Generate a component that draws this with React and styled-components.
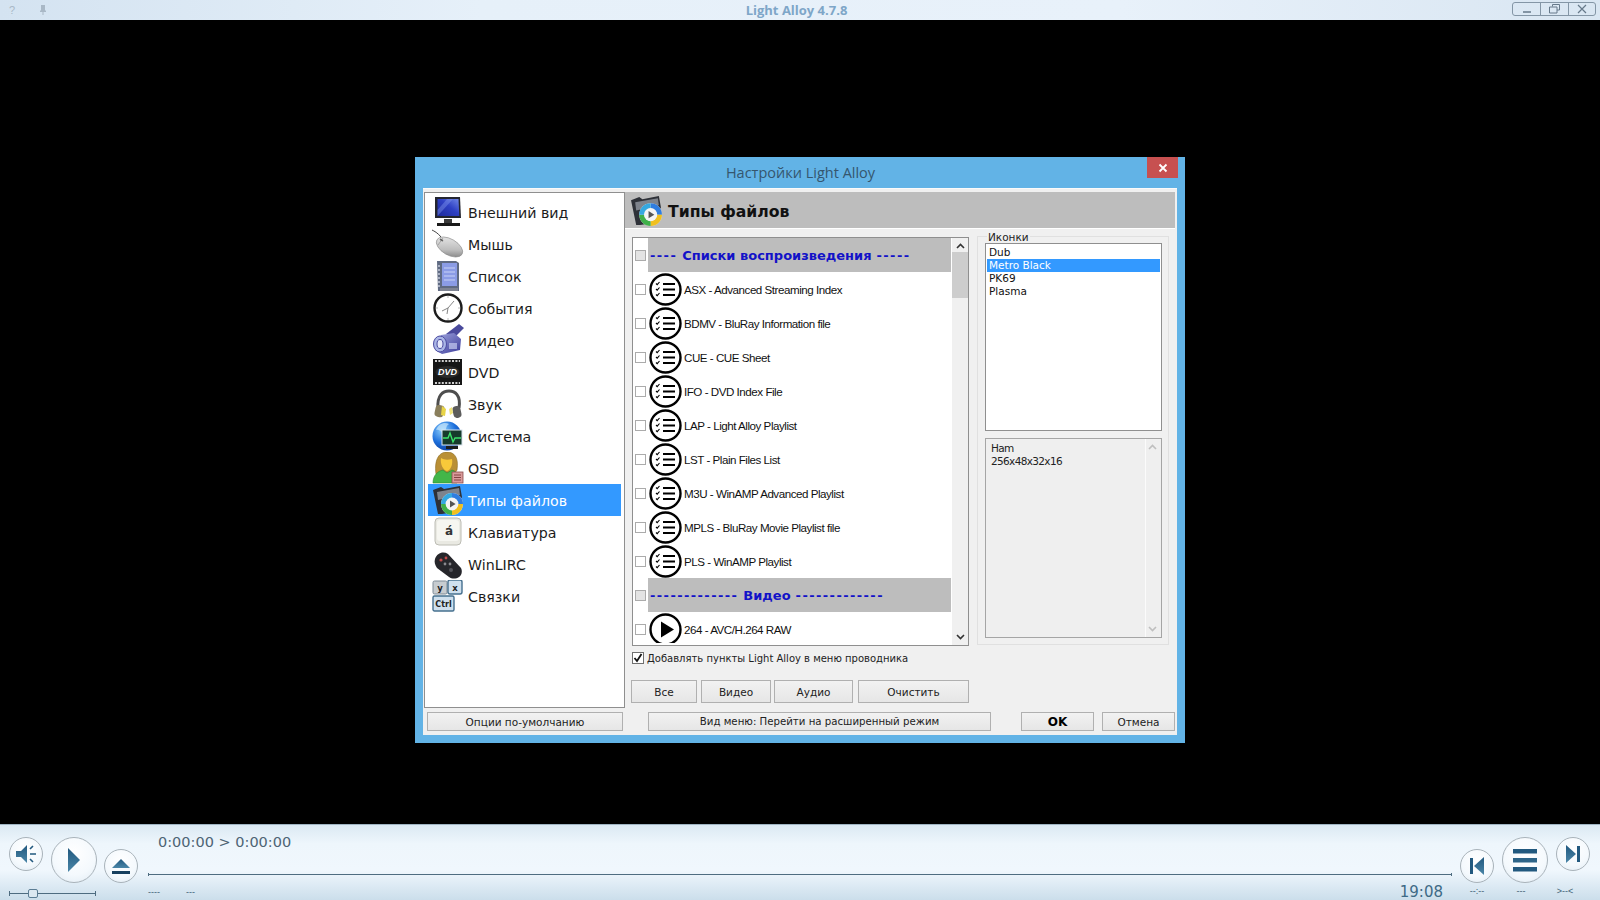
import React from "react";
import styled, { createGlobalStyle } from "styled-components";

const GlobalStyle = createGlobalStyle`
  html, body { margin: 0; padding: 0; background: #000; }
  body { font-family: "DejaVu Sans", sans-serif; overflow: hidden; }
  * { box-sizing: border-box; }
`;

const Page = styled.div`
  width: 1600px;
  height: 900px;
  display: grid;
  grid-template-rows: 20px 1fr 76px;
  background: #000;
`;

/* top title bar */
const TopBar = styled.div`
  display: grid;
  grid-template-columns: 1fr auto 1fr;
  align-items: center;
  padding: 0 4px 0 9px;
  background: linear-gradient(90deg, #d4e3f1 0%, #e6f0f9 30%, #e8f1fa 70%, #d9e6f2 100%);
`;
const TopLeft = styled.div`
  display: flex;
  align-items: center;
  gap: 24px;
  color: #a9b8c6;
  font: 11px "Liberation Sans", sans-serif;
`;
const TopTitle = styled.div`
  margin-right: 12px;
  color: #7ea6c8;
  font: bold 13px "Open Sans", sans-serif;
`;
const WindowButtons = styled.div`
  justify-self: end;
  display: flex;
  height: 14px;
  margin-top: -2px;
  border: 1px solid #8496a6;
  border-radius: 3px;
`;
const WindowButton = styled.div`
  width: 27.33px;
  display: flex;
  align-items: center;
  justify-content: center;
  & + & { border-left: 1px solid #8496a6; }
`;

/* video area with the settings window */
const Stage = styled.div`
  padding: 137px 0 0 415px;
  overflow: hidden;
`;
const Dialog = styled.div`
  width: 770px;
  height: 586px;
  display: flex;
  flex-direction: column;
  padding: 0 8px 8px;
  background: #62b3e6;
`;
const DialogHead = styled.div`
  height: 31px;
  flex: none;
  display: flex;
  align-items: flex-start;
  justify-content: space-between;
`;
const DialogTitle = styled.div`
  flex: 1;
  padding: 6px 0 0 31px;
  text-align: center;
  color: #35566e;
  font: 14.5px "Open Sans", sans-serif;
`;
const CloseButton = styled.div`
  width: 31px;
  height: 21px;
  margin-right: -1px;
  display: flex;
  align-items: center;
  justify-content: center;
  background: #c75050;
`;
const Client = styled.div`
  flex: 1;
  display: flex;
  flex-direction: column;
  padding: 4px 1px;
  background: #f0f0f0;
  border-top: 1px solid #fafafa;
`;
const Body = styled.div`
  display: flex;
  height: 516px;
  margin-top: -1px;
`;

const Sidebar = styled.div`
  width: 201px;
  flex: none;
  padding: 3px 3px 0 3px;
  background: #fff;
  border: 1px solid #8f8f8f;
`;
const SideRow = styled.div`
  height: 32px;
  display: flex;
  align-items: center;
  gap: 4px;
  padding-left: 4px;
  font-size: 14.2px;
  color: ${(p) => (p.$active ? "#fff" : "#1c1c1c")};
  background: ${(p) => (p.$active ? "#3399ff" : "transparent")};
`;
const SideLabel = styled.span`
  padding-top: 2px;
`;

const Main = styled.div`
  flex: 1;
  display: flex;
  flex-direction: column;
  min-width: 0;
`;
const Header = styled.div`
  height: 37px;
  flex: none;
  display: flex;
  align-items: center;
  gap: 5px;
  padding-left: 5px;
  background: #bdbdbd;
  border-bottom: 1px solid #fff;
  margin-right: 1px;
  color: #111;
  font: bold 15.7px "DejaVu Sans", sans-serif;
`;
const HeaderLabel = styled.span`
  padding-top: 2px;
`;
const Content = styled.div`
  padding: 8px 0 0 7px;
`;
const TopRow = styled.div`
  display: flex;
  gap: 8px;
`;

const FileList = styled.div`
  width: 337px;
  height: 409px;
  display: flex;
  background: #fff;
  border: 1px solid #8f8f8f;
`;
const FileRows = styled.div`
  flex: 1;
  min-width: 0;
  height: 405px;
  overflow: hidden;
`;
const FileRow = styled.div`
  height: 34px;
  display: flex;
  align-items: center;
  padding-left: 2px;
`;
const Check = styled.span`
  width: 11px;
  height: 11px;
  flex: none;
  margin-right: 2px;
  border: 1px solid #ababab;
  background: ${(p) => (p.$section ? "#e3e3e3" : "#fff")};
`;
const FileIcon = styled.svg`
  width: 33px;
  height: 33px;
  flex: none;
  margin: 0 2px 0 1px;
`;
const FileName = styled.span`
  font: 11.6px "Liberation Sans", sans-serif;
  letter-spacing: -0.47px;
  color: #111;
  white-space: nowrap;
`;
const SectionBand = styled.div`
  flex: 1;
  height: 34px;
  padding-left: 2px;
  display: flex;
  align-items: center;
  gap: 5px;
  background: #bdbdbd;
  color: #1212c8;
  font: bold 13px "DejaVu Sans", sans-serif;
  white-space: pre;
`;
const Dashes = styled.span`
  letter-spacing: 1.4px;
`;
const Scroll = styled.div`
  width: 16px;
  flex: none;
  margin-left: 1px;
  display: flex;
  flex-direction: column;
  align-items: center;
  background: ${(p) => p.$track || "#f0f0f0"};
  border-left: ${(p) => (p.$line ? "1px solid #fbfbfb" : "0")};
  justify-content: space-between;
  padding: 5px ${(p) => (p.$line ? 3 : 0)}px 5px 0;
`;
const ScrollColumn = styled.div`
  flex: 1;
  width: 100%;
  margin: 3px 0;
`;
const Thumb = styled.div`
  width: 100%;
  height: 46px;
  background: #cdcdcd;
`;

const GroupBox = styled.div`
  width: 192px;
  height: 409px;
  margin-top: -1px;
  padding: 0 6px 6px 7px;
  border: 1px solid #e0e0e0;
`;
const GroupLabel = styled.div`
  width: fit-content;
  height: 12px;
  margin: -6px 0 0 2px;
  padding: 0 1px;
  background: #f0f0f0;
  color: #222;
  font-size: 10.5px;
  line-height: 13px;
`;
const Skins = styled.div`
  height: 188px;
  padding: 2px 1px;
  background: #fff;
  border: 1px solid #8f8f8f;
`;
const Skin = styled.div`
  height: 13px;
  padding-left: 2px;
  font: 10.5px/13px "DejaVu Sans", sans-serif;
  color: ${(p) => (p.$active ? "#fff" : "#111")};
  background: ${(p) => (p.$active ? "#3399ff" : "transparent")};
`;
const Info = styled.div`
  height: 200px;
  margin-top: 7px;
  display: flex;
  background: #efefef;
  border: 1px solid #a5a5a5;
`;
const InfoText = styled.div`
  flex: 1;
  padding: 3px 0 0 5px;
  color: #222;
  font: 10.5px/13px "DejaVu Sans", sans-serif;
  letter-spacing: -0.65px;
`;

const ShellOption = styled.label`
  height: 14px;
  margin-top: 5px;
  display: flex;
  align-items: center;
  gap: 3px;
  color: #222;
  font-size: 10px;
`;
const CheckedBox = styled.span`
  width: 12px;
  height: 12px;
  display: flex;
  align-items: center;
  justify-content: center;
  background: #fff;
  border: 1px solid #6f6f6f;
`;
const ButtonRow = styled.div`
  display: flex;
  gap: 4px;
  margin: 15px 0 0 -1px;
`;
const Button = styled.div`
  width: ${(p) => p.$w}px;
  height: ${(p) => p.$h || 23}px;
  flex: none;
  display: flex;
  align-items: center;
  justify-content: center;
  margin-left: ${(p) => p.$ml || 0}px;
  background: linear-gradient(#f2f2f2, #e6e6e6);
  border: 1px solid #b0b0b0;
  color: ${(p) => (p.$bold ? "#000" : "#222")};
  font-size: ${(p) => p.$size || (p.$bold ? 12 : 10.5)}px;
  font-weight: ${(p) => (p.$bold ? 700 : 400)};
`;
const Footer = styled.div`
  display: flex;
  margin-top: 4px;
  padding-left: 3px;
`;

/* player controls */
const Bar = styled.div`
  display: grid;
  grid-template-columns: 148px 1fr 148px;
  background: linear-gradient(#dbe9f3 0%, #eef6fc 25%, #f0f7fd 60%, #cbdeeb 100%);
  border-top: 1px solid #9fb4c2;
`;
const Side = styled.div`
  display: flex;
  flex-direction: column;
  padding: 12px ${(p) => (p.$right ? 10 : 0)}px 0 ${(p) => (p.$right ? 8 : 9)}px;
`;
const Cluster = styled.div`
  height: 46px;
  display: flex;
  gap: 8px;
`;
const Round = styled.div`
  width: ${(p) => p.$d}px;
  height: ${(p) => p.$d}px;
  flex: none;
  align-self: ${(p) => p.$align || "flex-start"};
  margin-left: ${(p) => p.$ml || 0}px;
  display: flex;
  align-items: center;
  justify-content: center;
  border: 1.5px solid #a9b3ba;
  border-radius: 50%;
  background: radial-gradient(circle at 50% 35%, #ffffff 0%, #f4f9fd 60%, #dfeaf3 100%);
`;
const Volume = styled.div`
  position: relative;
  width: 87px;
  height: 1px;
  margin-top: 10px;
  background: #4e6c80;
  &::before, &::after {
    content: "";
    position: absolute;
    top: -2px;
    width: 1px;
    height: 5px;
    background: #4e6c80;
  }
  &::before { left: 0; }
  &::after { right: 0; }
`;
const VolumeThumb = styled.span`
  position: absolute;
  left: 19px;
  top: -4px;
  width: 10px;
  height: 9px;
  border: 1px solid #5b7d94;
  border-radius: 2px;
  background: #dbe8f1;
`;
const Center = styled.div`
  display: flex;
  flex-direction: column;
  min-width: 0;
`;
const TimeText = styled.div`
  height: 20px;
  margin: 7px 0 0 10px;
  color: #4d6474;
  font: 14.5px/20px "DejaVu Sans", sans-serif;
`;
const Seek = styled.div`
  position: relative;
  height: 1px;
  margin-top: 22px;
  background: #4e6c80;
  &::before, &::after {
    content: "";
    position: absolute;
    top: -1px;
    width: 1px;
    height: 3px;
    background: #4e6c80;
  }
  &::before { left: 0; }
  &::after { right: 0; }
`;
const BarFoot = styled.div`
  display: flex;
  align-items: center;
  height: 20px;
  margin-top: 7px;
  padding-right: 9px;
`;
const Tiny = styled.span`
  width: ${(p) => p.$w || "auto"};
  color: #3f5f75;
  font: 9px/10px "Liberation Sans", sans-serif;
  text-align: ${(p) => (p.$center ? "center" : "left")};
`;
const Clock = styled.div`
  margin-left: auto;
  color: #3e6a86;
  font: 15px/20px "DejaVu Sans", sans-serif;
`;
const TinyRow = styled.div`
  display: flex;
  margin-top: 3px;
`;

/* drawings */
const AppIcon = ({ children, size = 32 }) => (
  <svg width={size} height={size} viewBox="0 0 32 32" style={{ flex: "none" }}>
    {children}
  </svg>
);

const MonitorIcon = () => (
  <AppIcon>
    <defs>
      <linearGradient id="scr" x1="0" y1="1" x2="1" y2="0">
        <stop offset="0" stopColor="#1d2a9a" />
        <stop offset="0.55" stopColor="#2e40c4" />
        <stop offset="1" stopColor="#6f86e8" />
      </linearGradient>
    </defs>
    <path d="M3 1h25l1 21H3z" fill="#23252f" />
    <path d="M5.500 3h21l.8 17H5.500z" fill="url(#scr)" />
    <path d="M5.500 14 15 3h6L5.500 20z" fill="#7f95ee" opacity=".45" />
    <rect x="12" y="23" width="8" height="4" fill="#3b3b3b" />
    <path d="M5 27h23v3H5z" fill="#1a1a1a" />
  </AppIcon>
);
const MouseIcon = () => (
  <AppIcon>
    <defs>
      <linearGradient id="mou" x1="0" y1="0" x2="1" y2="1">
        <stop offset="0" stopColor="#efefef" />
        <stop offset=".6" stopColor="#bdbdbd" />
        <stop offset="1" stopColor="#6f6f6f" />
      </linearGradient>
    </defs>
    <path d="M0 2c2 1 6 3 9 7" fill="none" stroke="#444" strokeWidth="1" />
    <ellipse cx="17.500" cy="19" rx="14.500" ry="8" transform="rotate(30 17.500 19)" fill="url(#mou)" stroke="#8a8a8a" strokeWidth=".6" />
    <path d="M11 10 6 17" stroke="#999" strokeWidth=".8" />
    <ellipse cx="9.500" cy="12" rx="2" ry="1" transform="rotate(30 9.500 12)" fill="#666" />
  </AppIcon>
);
const BookIcon = () => (
  <AppIcon>
    <path d="M5 1h19l3 2v28H6z" fill="#5f6a82" />
    <path d="M10 3h15v23H10z" fill="#8b9ce6" />
    <path d="M12 8h11M12 12h11M12 16h11M12 20h11" stroke="#c8d2f6" strokeWidth="1" />
    <path d="M7 5v23" stroke="#a9b0c2" strokeWidth="2" strokeDasharray="2 2" />
    <path d="M8 28h18v3H8z" fill="#7f8493" />
  </AppIcon>
);
const ClockIcon = () => (
  <AppIcon>
    <circle cx="16" cy="16" r="13.500" fill="#fff" stroke="#1d1d1d" strokeWidth="2.400" />
    <path d="M16 16 22 9M16 16l-6 3M16 16l-1 6" stroke="#777" strokeWidth=".9" fill="none" />
    <path d="M16 4v2M16 26v2M4 16h2M26 16h2" stroke="#bbb" strokeWidth="1" />
  </AppIcon>
);
const CameraIcon = () => (
  <AppIcon>
    <defs>
      <linearGradient id="cam" x1="0" y1="0" x2="1" y2="1">
        <stop offset="0" stopColor="#a4aae0" />
        <stop offset="1" stopColor="#3a3a9a" />
      </linearGradient>
    </defs>
    <path d="M14 10 27 0l5 4-10 10z" fill="#4a4a9c" />
    <path d="M9 11l13-2 7 6-1 11-18 4-7-4z" fill="url(#cam)" />
    <ellipse cx="8" cy="20" rx="6.500" ry="8" fill="#aab6e6" stroke="#4a4aa0" />
    <ellipse cx="8" cy="20" rx="3" ry="4.500" fill="#e5e8fa" stroke="#4a4aa0" />
    <path d="M17 19h8v6h-8z" fill="#c5cbef" opacity=".7" />
  </AppIcon>
);
const DvdIcon = () => (
  <AppIcon>
    <rect x="1" y="3" width="29" height="26" fill="#161616" />
    <path d="M3 5h25M3 27h25" stroke="#cfcfcf" strokeWidth="2" strokeDasharray="2 1.400" />
    <ellipse cx="15.500" cy="16" rx="12" ry="6" fill="#2b2b2b" />
    <text x="15.500" y="19" textAnchor="middle" fontFamily="Liberation Sans" fontSize="9" fontWeight="700" fontStyle="italic" fill="#fff">DVD</text>
  </AppIcon>
);
const HeadphonesIcon = () => (
  <AppIcon>
    <path d="M6 20C5 7 11 3 17 3s12 4 10 17" fill="none" stroke="#4e4e4e" strokeWidth="3" />
    <rect x="3" y="17" width="9" height="12" rx="3.500" transform="rotate(12 7 23)" fill="#8a7f5c" />
    <rect x="21" y="18" width="8" height="12" rx="3.500" transform="rotate(-12 25 24)" fill="#5c5c5c" />
    <path d="M10 18l4 3-1 7-4-1z" fill="#e8d447" />
    <path d="M17 21l3-2 1 6-3 2z" fill="#efe27a" />
  </AppIcon>
);
const SystemIcon = () => (
  <AppIcon>
    <defs>
      <radialGradient id="glo" cx=".35" cy=".3" r=".8">
        <stop offset="0" stopColor="#8fd0fb" />
        <stop offset=".55" stopColor="#1d6fdc" />
        <stop offset="1" stopColor="#0c3a96" />
      </radialGradient>
    </defs>
    <circle cx="15" cy="16" r="14.500" fill="url(#glo)" />
    <path d="M4 10c4-1 5 3 8 2s1-6 5-8c-4-2-10-1-13 6z" fill="#cbe8fc" opacity=".7" />
    <rect x="10" y="10" width="20" height="15" fill="#163a2c" stroke="#d8e4ee" />
    <path d="M11 18h5l2-5 3 9 2-4h6" fill="none" stroke="#3be36a" strokeWidth="1.400" />
    <path d="M14 26h12v3H14z" fill="#1d1d1d" />
  </AppIcon>
);
const OsdIcon = () => (
  <AppIcon>
    <path d="M4 22C2 6 8 0 15 0s12 5 10 18l-2 3H6z" fill="#b98f35" stroke="#8a6a22" strokeWidth=".6" />
    <path d="M9 6c3 2 7 2 11 1 1 5-1 11-5 12-4-1-7-7-6-13z" fill="#f8c93a" />
    <path d="M1 31c0-8 5-12 10-13l4 3 5-3c3 .7 5 3 5 5v8z" fill="#43b649" stroke="#2c8a33" strokeWidth=".6" />
    <rect x="20" y="20" width="11" height="11" fill="#d99a9a" stroke="#8a4a4a" strokeWidth=".8" />
    <path d="M22 23h7M22 25.500h7M22 28h7" stroke="#7a3b3b" strokeWidth=".9" />
  </AppIcon>
);
const TypesIcon = ({ size }) => (
  <AppIcon size={size}>
    <path d="M1 6 9 3l3 2 16-3 2 11-8 15-12 2H6z" fill="#2e3138" />
    <path d="M5 8l22-4 1 7-22 5z" fill="#7e838c" />
    <circle cx="20" cy="20" r="11" fill="#e8e8e8" />
    <path d="M20 9a11 11 0 0 1 11 11h-5a6 6 0 0 0-6-6z" fill="#2f7de0" />
    <path d="M31 20a11 11 0 0 1-11 11v-5a6 6 0 0 0 6-6z" fill="#f0c020" />
    <path d="M20 31A11 11 0 0 1 9 20h5a6 6 0 0 0 6 6z" fill="#3fb04a" />
    <path d="M9 20A11 11 0 0 1 20 9v5a6 6 0 0 0-6 6z" fill="#35a8e0" />
    <circle cx="20" cy="20" r="6.400" fill="#f4f4f4" />
    <path d="M18 16.500v7l5.600-3.500z" fill="#555" />
  </AppIcon>
);
const KeyIcon = () => (
  <AppIcon>
    <rect x="3" y="2" width="26" height="27" rx="4" fill="#e9e9e2" stroke="#bcbcb4" />
    <rect x="5" y="4" width="22" height="21" rx="3" fill="#f6f6f1" />
    <text x="17" y="19" textAnchor="middle" fontFamily="DejaVu Sans" fontSize="12" fontWeight="700" fill="#333">á</text>
  </AppIcon>
);
const RemoteIcon = () => (
  <AppIcon>
    <path d="M3 11c2-6 8-8 13-5l13 14c2 4 0 8-2 9-3 2-7 2-10 0L5 20c-2-3-3-6-2-9z" fill="#26262b" />
    <circle cx="9" cy="12" r="1.600" fill="#c44a4a" />
    <circle cx="14" cy="10" r="1.400" fill="#c44a4a" />
    <circle cx="13" cy="16" r="1.400" fill="#8a8a8f" />
    <circle cx="18" cy="16" r="1.400" fill="#8a8a8f" />
    <circle cx="19" cy="22" r="2" fill="#55555c" />
  </AppIcon>
);
const LinksIcon = () => (
  <AppIcon>
    <rect x="1" y="1" width="14" height="13" rx="1.500" fill="#c7ccd0" stroke="#7d8a96" />
    <text x="8" y="11" textAnchor="middle" fontFamily="DejaVu Sans" fontSize="8.500" fontWeight="700" fill="#222">у</text>
    <rect x="16" y="0" width="14" height="14" rx="2" fill="#cfe0ee" stroke="#46708f" strokeWidth="1.400" />
    <text x="23" y="11" textAnchor="middle" fontFamily="DejaVu Sans" fontSize="8.500" fontWeight="700" fill="#222">х</text>
    <rect x="1" y="16" width="21" height="15" rx="1.500" fill="#cfe0ee" stroke="#46708f" strokeWidth="1.400" />
    <text x="11.500" y="27" textAnchor="middle" fontFamily="DejaVu Sans" fontSize="8" fontWeight="700" fill="#222">Ctrl</text>
  </AppIcon>
);

const ListGlyph = () => (
  <FileIcon viewBox="0 0 33 33">
    <circle cx="16.500" cy="16.500" r="15" fill="#fff" stroke="#000" strokeWidth="2.400" />
    <path d="M14 11h12M14 16.500h12M14 22h12" stroke="#000" strokeWidth="2.200" />
    <path d="M7 10.500l1.200 1.200L10.500 9M7 16l1.200 1.200L10.500 14.500M7 21.500l1.200 1.200 2.300-2.700" fill="none" stroke="#000" strokeWidth="1.100" />
  </FileIcon>
);
const PlayGlyph = () => (
  <FileIcon viewBox="0 0 33 33">
    <circle cx="16.500" cy="16.500" r="15" fill="#fff" stroke="#000" strokeWidth="2.400" />
    <path d="M12 8.500v16l13-8z" fill="#000" />
  </FileIcon>
);

const PlayerIcon = ({ w, h, children }) => (
  <svg width={w} height={h} viewBox={`0 0 ${w} ${h}`}>
    <defs>
      <linearGradient id="pl" x1="0" y1="0" x2="0" y2="1">
        <stop offset="0" stopColor="#22597f" />
        <stop offset="1" stopColor="#4a86a8" />
      </linearGradient>
    </defs>
    {children}
  </svg>
);

const sections = [
  { label: "Внешний вид", Icon: MonitorIcon },
  { label: "Мышь", Icon: MouseIcon },
  { label: "Список", Icon: BookIcon },
  { label: "События", Icon: ClockIcon },
  { label: "Видео", Icon: CameraIcon },
  { label: "DVD", Icon: DvdIcon },
  { label: "Звук", Icon: HeadphonesIcon },
  { label: "Система", Icon: SystemIcon },
  { label: "OSD", Icon: OsdIcon },
  { label: "Типы файлов", Icon: TypesIcon, active: true },
  { label: "Клавиатура", Icon: KeyIcon },
  { label: "WinLIRC", Icon: RemoteIcon },
  { label: "Связки", Icon: LinksIcon },
];

const fileRows = [
  { title: "Списки воспроизведения", lead: "----", tail: "-----" },
  { name: "ASX - Advanced Streaming Index" },
  { name: "BDMV - BluRay Information file" },
  { name: "CUE - CUE Sheet" },
  { name: "IFO - DVD Index File" },
  { name: "LAP - Light Alloy Playlist" },
  { name: "LST - Plain Files List" },
  { name: "M3U - WinAMP Advanced Playlist" },
  { name: "MPLS - BluRay Movie Playlist file" },
  { name: "PLS - WinAMP Playlist" },
  { title: "Видео", lead: "-------------", tail: "-------------" },
  { name: "264 - AVC/H.264 RAW", play: true },
];

export default function App() {
  return (
    <Page>
      <GlobalStyle />
      <TopBar>
        <TopLeft>
          <span>?</span>
          <svg width="8" height="12" viewBox="0 0 8 12">
            <path d="M2 1h4v5l1 1v1H4.500v3h-1V8H1V7l1-1z" fill="#a9b8c6" />
          </svg>
        </TopLeft>
        <TopTitle>Light Alloy 4.7.8</TopTitle>
        <WindowButtons>
          <WindowButton>
            <svg width="10" height="10" viewBox="0 0 10 10">
              <path d="M1 8h8" stroke="#66798a" strokeWidth="1.500" />
            </svg>
          </WindowButton>
          <WindowButton>
            <svg width="11" height="10" viewBox="0 0 11 10">
              <path d="M3.500 2.500v-2h7v5.500h-2.500M.5 3h7.500v6H.5z" fill="none" stroke="#66798a" />
            </svg>
          </WindowButton>
          <WindowButton>
            <svg width="10" height="10" viewBox="0 0 10 10">
              <path d="M1 1l8 8M9 1l-8 8" stroke="#66798a" strokeWidth="1.200" />
            </svg>
          </WindowButton>
        </WindowButtons>
      </TopBar>

      <Stage>
        <Dialog>
          <DialogHead>
            <DialogTitle>Настройки Light Alloy</DialogTitle>
            <CloseButton>
              <svg width="10" height="10" viewBox="0 0 10 10">
                <path d="M1.500 1.500l7 7M8.500 1.500l-7 7" stroke="#fff" strokeWidth="1.800" />
              </svg>
            </CloseButton>
          </DialogHead>
          <Client>
            <Body>
              <Sidebar>
                {sections.map(({ label, Icon, active }) => (
                  <SideRow key={label} $active={active}>
                    <Icon />
                    <SideLabel>{label}</SideLabel>
                  </SideRow>
                ))}
              </Sidebar>
              <Main>
                <Header>
                  <TypesIcon size={33} />
                  <HeaderLabel>Типы файлов</HeaderLabel>
                </Header>
                <Content>
                  <TopRow>
                    <FileList>
                      <FileRows>
                        {fileRows.map((row) =>
                          row.title ? (
                            <FileRow key={row.title}>
                              <Check $section />
                              <SectionBand>
                                <Dashes>{row.lead}</Dashes>
                                {row.title}
                                <Dashes>{row.tail}</Dashes>
                              </SectionBand>
                            </FileRow>
                          ) : (
                            <FileRow key={row.name}>
                              <Check />
                              {row.play ? <PlayGlyph /> : <ListGlyph />}
                              <FileName>{row.name}</FileName>
                            </FileRow>
                          )
                        )}
                      </FileRows>
                      <Scroll>
                        <svg width="9" height="6" viewBox="0 0 9 6">
                          <path d="M1 5l3.500-3.500L8 5" fill="none" stroke="#333" strokeWidth="1.600" />
                        </svg>
                        <ScrollColumn>
                          <Thumb />
                        </ScrollColumn>
                        <svg width="9" height="6" viewBox="0 0 9 6">
                          <path d="M1 1l3.500 3.500L8 1" fill="none" stroke="#333" strokeWidth="1.600" />
                        </svg>
                      </Scroll>
                    </FileList>
                    <GroupBox>
                      <GroupLabel>Иконки</GroupLabel>
                      <Skins>
                        <Skin>Dub</Skin>
                        <Skin $active>Metro Black</Skin>
                        <Skin>PK69</Skin>
                        <Skin>Plasma</Skin>
                      </Skins>
                      <Info>
                        <InfoText>
                          Ham
                          <br />
                          256x48x32x16
                        </InfoText>
                        <Scroll $track="#efefef" $line>
                          <svg width="9" height="6" viewBox="0 0 9 6">
                            <path d="M1 5l3.500-3.500L8 5" fill="none" stroke="#bfbfbf" strokeWidth="1.600" />
                          </svg>
                          <svg width="9" height="6" viewBox="0 0 9 6">
                            <path d="M1 1l3.500 3.500L8 1" fill="none" stroke="#bfbfbf" strokeWidth="1.600" />
                          </svg>
                        </Scroll>
                      </Info>
                    </GroupBox>
                  </TopRow>
                  <ShellOption>
                    <CheckedBox>
                      <svg width="10" height="10" viewBox="0 0 10 10">
                        <path d="M1.500 5l2.500 3 4.500-7" fill="none" stroke="#111" strokeWidth="1.800" />
                      </svg>
                    </CheckedBox>
                    Добавлять пункты Light Alloy в меню проводника
                  </ShellOption>
                  <ButtonRow>
                    <Button $w={66}>Все</Button>
                    <Button $w={70}>Видео</Button>
                    <Button $w={79} $ml={-1}>Аудио</Button>
                    <Button $w={111} $ml={1}>Очистить</Button>
                  </ButtonRow>
                </Content>
              </Main>
            </Body>
            <Footer>
              <Button $w={196} $h={19}>Опции по-умолчанию</Button>
              <Button $w={343} $h={19} $ml={25} $size={10.2}>Вид меню: Перейти на расширенный режим</Button>
              <Button $w={73} $h={19} $ml={30} $bold>OK</Button>
              <Button $w={73} $h={19} $ml={8}>Отмена</Button>
            </Footer>
          </Client>
        </Dialog>
      </Stage>

      <Bar>
        <Side>
          <Cluster>
            <Round $d={34}>
              <PlayerIcon w={22} h={20}>
                <path d="M1 7h5l6-6v18l-6-6H1z" fill="url(#pl)" />
                <path d="M15 10h6M15 5l3-3M15 15l3 3" stroke="#22597f" strokeWidth="1.600" />
              </PlayerIcon>
            </Round>
            <Round $d={46}>
              <PlayerIcon w={16} h={26}>
                <path d="M2 1l12 12L2 25z" fill="url(#pl)" />
              </PlayerIcon>
            </Round>
            <Round $d={34} $align="flex-end" $ml={-1}>
              <PlayerIcon w={20} h={17}>
                <path d="M10 1l9 9H1z" fill="url(#pl)" />
                <rect x="1" y="13" width="18" height="3" fill="#17405f" />
              </PlayerIcon>
            </Round>
          </Cluster>
          <Volume>
            <VolumeThumb />
          </Volume>
        </Side>
        <Center>
          <TimeText>0:00:00 &gt; 0:00:00</TimeText>
          <Seek />
          <BarFoot>
            <Tiny $w="38px">----</Tiny>
            <Tiny>---</Tiny>
            <Clock>19:08</Clock>
          </BarFoot>
        </Center>
        <Side $right>
          <Cluster>
            <Round $d={34} $align="flex-end">
              <PlayerIcon w={16} h={18}>
                <rect x="1" y="1" width="3" height="16" fill="#22597f" />
                <path d="M15 0v18L5 9z" fill="url(#pl)" />
              </PlayerIcon>
            </Round>
            <Round $d={46}>
              <PlayerIcon w={24} h={23}>
                <rect width="24" height="4.500" fill="#22597f" />
                <rect y="9" width="24" height="4.500" fill="#2d6488" />
                <rect y="18" width="24" height="4.500" fill="#22597f" />
              </PlayerIcon>
            </Round>
            <Round $d={34}>
              <PlayerIcon w={16} h={18}>
                <path d="M1 0v18l10-9z" fill="url(#pl)" />
                <rect x="12" y="1" width="3" height="16" fill="#22597f" />
              </PlayerIcon>
            </Round>
          </Cluster>
          <TinyRow>
            <Tiny $w="34px" $center>--:--</Tiny>
            <Tiny $w="54px" $center>---</Tiny>
            <Tiny $w="34px" $center>&gt;--&lt;</Tiny>
          </TinyRow>
        </Side>
      </Bar>
    </Page>
  );
}
